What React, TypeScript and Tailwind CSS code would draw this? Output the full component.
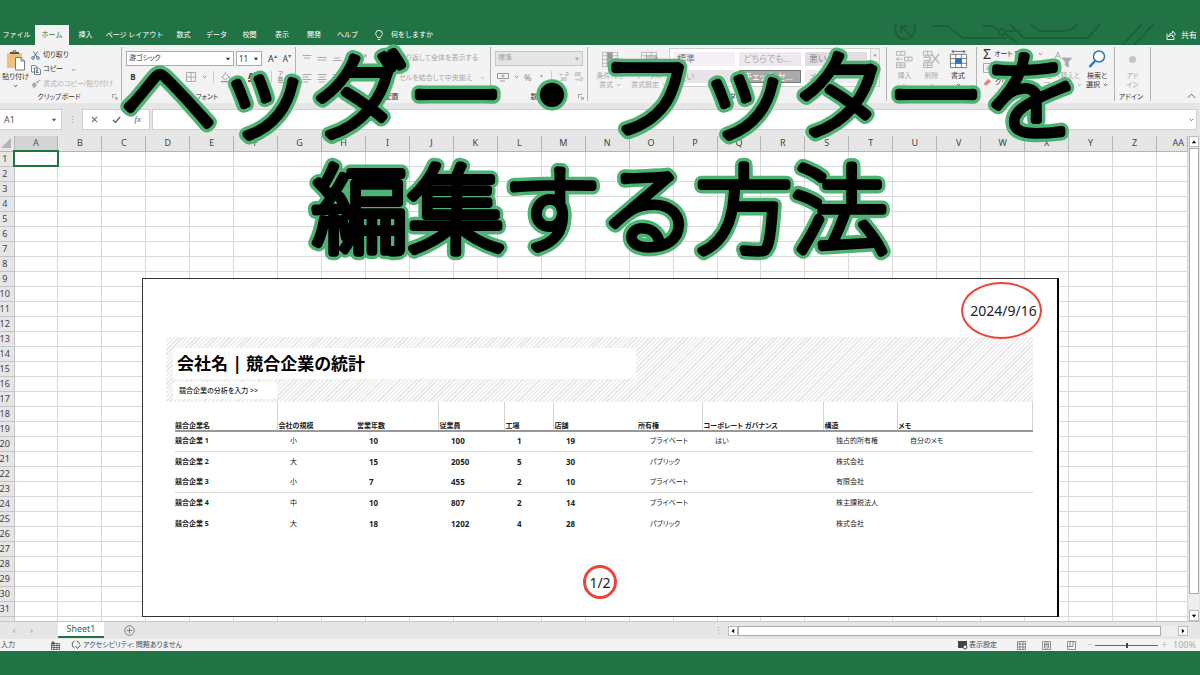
import type { ReactNode } from "react";

const columns = ["A", "B", "C", "D", "E", "F", "G", "H", "I", "J", "K", "L", "M", "N", "O", "P", "Q", "R", "S", "T", "U", "V", "W", "X", "Y", "Z", "AA"];
const rows = Array.from({ length: 32 }, (_, i) => i + 1);

const tabs = [
  { label: "ファイル", width: "w-[35px] pl-[2px] pr-1" },
  { label: "ホーム", width: "w-[34px]", active: true },
  { label: "挿入", width: "w-[33px]" },
  { label: "ページ レイアウト", width: "w-[65px]" },
  { label: "数式", width: "w-[33px]" },
  { label: "データ", width: "w-[33px]" },
  { label: "校閲", width: "w-[33px]" },
  { label: "表示", width: "w-[32px]" },
  { label: "開発", width: "w-[32px]" },
  { label: "ヘルプ", width: "w-[35px]" },
];

const competitors = [
  { name: "競合企業 1", size: "小", years: 10, staff: 100, plants: 1, shops: 19, owner: "プライベート", gov: "はい", structure: "独占的所有権", memo: "自分のメモ" },
  { name: "競合企業 2", size: "大", years: 15, staff: 2050, plants: 5, shops: 30, owner: "パブリック", gov: "", structure: "株式会社", memo: "" },
  { name: "競合企業 3", size: "小", years: 7, staff: 455, plants: 2, shops: 10, owner: "プライベート", gov: "", structure: "有限会社", memo: "" },
  { name: "競合企業 4", size: "中", years: 10, staff: 807, plants: 2, shops: 14, owner: "プライベート", gov: "", structure: "株主課税法人", memo: "" },
  { name: "競合企業 5", size: "大", years: 18, staff: 1202, plants: 4, shops: 28, owner: "パブリック", gov: "", structure: "株式会社", memo: "" },
];

const Chevron = ({ className = "text-gray-500" }: { className?: string }) => (
  <svg viewBox="0 0 6 4" className={`w-[5px] h-[4px] shrink-0 ${className}`} fill="none" stroke="currentColor">
    <path d="M1 .8 3 2.8 5 .8" />
  </svg>
);

const Triangle = ({ turn = "" }: { turn?: string }) => (
  <svg viewBox="0 0 6 6" className={`w-[6px] h-[6px] shrink-0 ${turn}`} fill="currentColor">
    <path d="M.8 1.800h4.400L3 4.500z" />
  </svg>
);

const Launcher = () => (
  <svg viewBox="0 0 7 7" className="w-[6px] h-[6px]" fill="none" stroke="#777" strokeWidth=".8">
    <path d="M.5 5V.5H5M3 3l3 3M6 3.5V6H3.5" />
  </svg>
);

const Group = ({ label, width, launcher, children }: { label: string; width: string; launcher?: boolean; children: ReactNode }) => (
  <section aria-label={label} className={`${width} shrink-0 h-[54px] mt-[2px] flex flex-col border-r border-[#b4b4b4]`}>
    <div className="flex-1 min-h-0">{children}</div>
    <div className="h-[8px] flex items-center justify-center">
      <span className="flex-1" />
      <span className="leading-[8px]">{label}</span>
      <span className="flex-1 flex justify-end pr-[3px]">
        {launcher && (
          <button aria-label={`${label}の設定`}>
            <Launcher />
          </button>
        )}
      </span>
    </div>
  </section>
);

const BigButton = ({ icon, lines, width, muted, chevron = true }: { icon: ReactNode; lines: string[]; width: string; muted?: boolean; chevron?: boolean }) => (
  <button className={`${width} shrink-0 flex flex-col items-center ${muted ? "text-[#a8a8a8]" : "text-[#333]"}`}>
    <span className="h-[24px] flex items-center">{icon}</span>
    {lines.map((line, i) => (
      <span key={line} className="h-[9px] leading-[9px] flex items-center gap-[3px] whitespace-nowrap">
        {line}
        {chevron && lines.length > 1 && i === lines.length - 1 && <Chevron className="text-current" />}
      </span>
    ))}
    {chevron && lines.length === 1 && (
      <span className="h-[9px] flex items-center">
        <Chevron className="text-current" />
      </span>
    )}
  </button>
);

const PasteIcon = () => (
  <svg viewBox="0 0 20 22" className="w-[20px] h-[22px]">
    <path d="M1 4h15v15H1z" fill="#efc17c" />
    <path d="M4 5V3h2.500a2 2 0 0 1 4 0H13v2z" fill="#555" />
    <circle cx="8.500" cy="2.600" r=".8" fill="#f3f3f3" />
    <path d="M9.500 8.500h5.500l3.500 3.500v9h-9z" fill="#fff" stroke="#777" />
    <path d="M15 8.500V12h3.500" fill="none" stroke="#777" />
  </svg>
);

const CutIcon = () => (
  <svg viewBox="0 0 10 10" className="w-[9px] h-[9px]" fill="none">
    <path d="M2.500.5 7 7M7.500.5 3 7" stroke="#555" />
    <circle cx="2.200" cy="7.800" r="1.500" stroke="#2f75b5" />
    <circle cx="7.800" cy="7.800" r="1.500" stroke="#2f75b5" />
  </svg>
);

const CopyIcon = () => (
  <svg viewBox="0 0 10 10" className="w-[10px] h-[10px]" fill="#fff" stroke="#666" strokeWidth=".8">
    <path d="M.5.5h4L6 2v5H.5zM3.500 3h4L9.500 5v4.500h-6z" />
    <path d="M5 5.500h2M5 7.500h3M2 3h1" stroke="#2f75b5" />
  </svg>
);

const BrushIcon = () => (
  <svg viewBox="0 0 10 10" className="w-[10px] h-[10px]" fill="#aaa">
    <path d="M.5 5.500 4 3l2 3-3 3.500zM5 2.500l1.500-1 1.500 2-1.500 1zM7.500 1.500 9 .5l.8 1L8.500 2.500z" />
  </svg>
);

const CellsIcon = ({ kind }: { kind: "insert" | "delete" | "format" }) => (
  <svg viewBox="0 0 20 20" className="w-[19px] h-[19px]" fill="none" stroke={kind === "format" ? "#777" : "#b0b0b0"}>
    {kind === "format" ? (
      <>
        <path d="M1.500 4.500h17v14h-17zM1.500 9h17M1.500 14h17M7 4.500v14M13 4.500v14" fill="#fff" />
        <path d="M7 9h6v5H7z" fill="#2f75b5" stroke="#2f75b5" />
        <path d="M3 1.500h14M5 0 3 1.500 5 3M15 0l2 1.500L15 3" stroke="#2f75b5" />
      </>
    ) : (
      <>
        <path d="M1.500 1.500h9v4h-9zM6 1.500v4M1.500 13.500h9v5h-9zM6 13.500v5M1.500 16h9" />
        {kind === "insert" ? <path d="M10 7.500h8v4h-8zM14 7.500v4M8 9.500H1.500M4 7.500l-2.500 2L4 11.500" /> : <path d="M1.500 7.500h7v4h-7M10 4l8 10M18 4l-8 10" strokeWidth="1.300" />}
      </>
    )}
  </svg>
);

const StyleIcon = ({ table }: { table?: boolean }) => (
  <svg viewBox="0 0 20 18" className="w-[19px] h-[17px]" fill="none" stroke="#aaa" strokeWidth=".8">
    <path d="M1.500 1.500h16v15h-16zM1.500 5h16M1.500 9h16M1.500 13h16M6.500 1.500v15M12 1.500v15" />
    {table ? <path d="M6.500 5h11v8h-11z" fill="#c9c9c9" /> : <path d="M6.500 1.500H12V9H6.500zM6.500 9H9v7.500H6.500z" fill="#999" />}
    {table && <path d="m10 16 7-10 2 1.500L13 17z" fill="#999" stroke="none" />}
  </svg>
);

const LinesIcon = ({ d }: { d: string }) => (
  <svg viewBox="0 0 10 10" className="w-[10px] h-[10px] shrink-0" fill="none" stroke="#aaa">
    <path d={d} />
  </svg>
);

const Ribbon = () => (
  <div className="h-[58px] flex bg-[#f3f3f3] text-[7px] text-[#333] overflow-hidden">
    <Group label="クリップボード" width="w-[122px]" launcher>
      <div className="flex pt-[1px]">
        <BigButton width="w-[31px]" icon={<PasteIcon />} lines={["貼り付け"]} />
        <div className="flex flex-col items-start">
          <button className="h-[14px] flex items-center gap-[3px]"><CutIcon />切り取り</button>
          <button className="h-[15px] flex items-center gap-[2px]"><CopyIcon />コピー<span className="w-1" /><Chevron /></button>
          <button className="h-[14px] flex items-center gap-[2px] text-[#b0b0b0]"><BrushIcon />書式のコピー/貼り付け</button>
        </div>
      </div>
    </Group>

    <Group label="フォント" width="w-[174px]" launcher>
      <div className="flex items-center pl-1 pt-1 gap-[2px]">
        <button aria-label="フォント名" className="w-[108px] h-[15px] px-[2px] flex items-center justify-between bg-white border border-[#ababab] text-[7px]">
          游ゴシック<Triangle />
        </button>
        <button aria-label="フォント サイズ" className="w-[26px] h-[15px] px-[2px] flex items-center justify-between bg-white border border-[#ababab] text-[8px]">
          11<Triangle />
        </button>
        <button className="ml-1 text-[9px] leading-[12px] flex">A<span className="text-[6px] leading-[6px] text-[#2f75b5]">▴</span></button>
        <button className="ml-1 text-[8px] leading-[12px] flex">A<span className="text-[6px] leading-[6px] text-[#2f75b5]">▾</span></button>
      </div>
      <div className="flex items-center h-[22px] pl-[6px] gap-[6px]">
        <button className="font-bold text-[8px] w-[10px]">B</button>
        <button className="italic text-[8px] w-[10px]">I</button>
        <button className="underline text-[8px] w-[20px]">U</button>
        <LinesIcon d="M.5.5h9v9h-9zM5 .5v9M.5 5h9" />
        <Chevron />
        <span className="w-px h-3 bg-[#ccc]" />
        <svg viewBox="0 0 12 12" className="w-[11px] h-[11px]" fill="none" stroke="#999">
          <path d="m2 5.500 4-4 4 4-4 3zM6 1.500V.3M10 5.500l1.300 2" />
          <path d="M1 10.500h10" strokeWidth="1.500" />
        </svg>
        <Chevron />
        <span className="text-[8px] leading-[8px] font-bold border-b-2 border-[#e33]">A</span>
        <Chevron />
        <span className="w-px h-3 bg-[#ccc]" />
        <span className="text-[6px] leading-[6px] text-[#888] flex flex-col items-center"><span>ア</span><span>亜</span></span>
      </div>
    </Group>

    <Group label="配置" width="w-[195px]" launcher>
      <div className="flex items-center h-[22px] pl-[6px] gap-[5px] text-[#a8a8a8]">
        <LinesIcon d="M.5 2.500h9M2 5h6" />
        <LinesIcon d="M.5 4.500h9M.5 7h9" />
        <LinesIcon d="M.5 7.500h9M2 5h6" />
        <span className="w-1" />
        <svg viewBox="0 0 12 12" className="w-[12px] h-[12px]" fill="none" stroke="#999">
          <path d="m2 11 8-8M7.500 3H10v2.500" />
          <circle cx="3" cy="5" r="1.500" />
          <path d="m4 2.500 3 3" />
        </svg>
        <Chevron />
        <button className="ml-4 whitespace-nowrap">折り返して全体を表示する</button>
      </div>
      <div className="flex items-center h-[18px] pl-[6px] gap-[5px] text-[#a8a8a8]">
        <LinesIcon d="M.5 1.500h9M.5 4h6M.5 6.500h9M.5 9h6" />
        <LinesIcon d="M.5 1.500h9M2 4h6M.5 6.500h9M2 9h6" />
        <LinesIcon d="M.5 1.500h9M3 4h7M.5 6.500h9M3 9h7" />
        <span className="w-[32px]" />
        <LinesIcon d="M.5.5h9v9h-9zM.5 3h9M.5 7h9M5 .5V3M5 7v2.500" />
        <button className="flex items-center gap-2 whitespace-nowrap">セルを結合して中央揃え<Chevron className="text-[#aaa]" /></button>
      </div>
    </Group>

    <Group label="数値" width="w-[97px]" launcher>
      <div className="pl-1 pt-1 text-[#a8a8a8]">
        <button aria-label="表示形式" className="w-[88px] h-[15px] px-[2px] flex items-center justify-between bg-[#e6e6e6] border border-[#c6c6c6]">
          標準<Triangle />
        </button>
      </div>
      <div className="flex items-center h-[22px] pl-[6px] gap-[5px] text-[#888]">
        <svg viewBox="0 0 12 10" className="w-[12px] h-[10px]" fill="none" stroke="#999">
          <path d="M.5 1.500h11v5H.5z" />
          <circle cx="6" cy="4" r="1" />
          <path d="M3 9h5" />
        </svg>
        <Chevron />
        <span className="text-[9px] leading-[9px]">%</span>
        <span className="text-[9px] leading-[9px] font-bold ml-1">’</span>
        <span className="w-px h-3 bg-[#ccc] ml-1" />
        <span className="text-[5px] leading-[5px] ml-[2px]">←.0<br />.00</span>
        <span className="text-[5px] leading-[5px]">.00<br />→.0</span>
      </div>
    </Group>

    <Group label="スタイル" width="w-[299px]">
      <div className="flex pl-[2px]">
        <BigButton width="w-[40px]" muted icon={<StyleIcon />} lines={["条件付き", "書式"]} />
        <BigButton width="w-[38px]" muted icon={<StyleIcon table />} lines={["テーブル", "書式設定"]} />
        <div className="ml-[1px] mt-[1px] w-[211px] h-[39px] flex bg-white border border-[#cfcfcf] text-[9px] text-[#aaa]">
          <div className="flex-1 grid grid-cols-3 gap-1 p-[3px]">
            <button className="bg-[#f5f0f5] text-left pl-1 leading-[13px] text-[#777]">標準</button>
            <button className="bg-[#efe9ef] text-left pl-1 leading-[13px] whitespace-nowrap overflow-hidden">どちらでも...</button>
            <button className="bg-[#e4dee4] text-left pl-1 leading-[13px] text-[#888]">悪い</button>
            <button className="bg-[#e9e4e9] text-left pl-1 leading-[13px]">良い</button>
            <button className="bg-[#aaa] text-left pl-1 leading-[11px] border border-[#777] text-white whitespace-nowrap overflow-hidden">チェック セ...</button>
            <button className="bg-[#f1edf1] text-left pl-1 leading-[13px]">メモ</button>
          </div>
          <div className="w-[9px] flex flex-col items-center border-l border-[#cfcfcf] bg-[#f0f0f0]">
            <button aria-label="前のスタイル" className="flex-1"><Triangle turn="rotate-180" /></button>
            <button aria-label="次のスタイル" className="flex-1 border-y border-[#cfcfcf]"><Triangle /></button>
            <button aria-label="その他のスタイル" className="flex-1"><Triangle /></button>
          </div>
        </div>
      </div>
    </Group>

    <Group label="セル" width="w-[90px]">
      <div className="flex pl-1">
        <BigButton width="w-[27px]" muted icon={<CellsIcon kind="insert" />} lines={["挿入"]} />
        <BigButton width="w-[27px]" muted icon={<CellsIcon kind="delete" />} lines={["削除"]} />
        <BigButton width="w-[26px]" icon={<CellsIcon kind="format" />} lines={["書式"]} />
      </div>
    </Group>

    <Group label="編集" width="w-[138px]">
      <div className="flex pl-[6px]">
        <div className="w-[62px] flex flex-col items-start">
          <button className="h-[14px] flex items-center gap-[3px] whitespace-nowrap"><span className="text-[14px] leading-[14px]">Σ</span>オート SUM<span className="w-[2px]" /><Chevron /></button>
          <button className="h-[14px] flex items-center gap-[3px] text-[#a8a8a8]"><LinesIcon d="M.5.5h9v9h-9zM5 2v5M3 5l2 2 2-2" />フィル</button>
          <button className="h-[14px] flex items-center gap-[3px]">
            <svg viewBox="0 0 10 10" className="w-[9px] h-[9px]"><path d="m1 6 5-5 3 3-5 4H2z" fill="#ee7c80" /></svg>
            クリア
          </button>
        </div>
        <BigButton
          width="w-[36px]"
          muted
          icon={
            <svg viewBox="0 0 20 18" className="w-[19px] h-[17px]" fill="none" stroke="#aaa">
              <path d="m1 8 3-7 3 7M2 5.500h4M1.500 10.500h5l-5 6h5" />
              <path d="M8.500 7.500h10L15 11.500V17l-3-2v-3.500z" fill="#aaa" />
            </svg>
          }
          lines={["並べ替えと", "フィルター"]}
        />
        <BigButton
          width="w-[32px]"
          icon={
            <svg viewBox="0 0 18 18" className="w-[18px] h-[18px]" fill="none" stroke="#2f75b5">
              <circle cx="11" cy="6.500" r="5.500" strokeWidth="1.500" fill="#fff" />
              <path d="m7 11-5.500 6" strokeWidth="2.500" />
            </svg>
          }
          lines={["検索と", "選択"]}
        />
      </div>
    </Group>

    <Group label="アドイン" width="w-[36px]">
      <BigButton width="w-[35px]" muted chevron={false} icon={<span className="w-[7px] h-[7px] rounded-full bg-[#c4c4c4]" />} lines={["アド", "イン"]} />
    </Group>

    <div className="flex-1 flex items-end justify-end p-[4px]">
      <button aria-label="リボンを折りたたむ">
        <svg viewBox="0 0 10 6" className="w-[9px] h-[6px]" fill="none" stroke="#555"><path d="m1 5 4-4 4 4" /></svg>
      </button>
    </div>
  </div>
);

const TitleBar = () => (
  <header className="relative h-[45px] flex items-end bg-[#217346] text-white text-[7px]">
    {/* circuit pattern of the Office theme */}
    <svg viewBox="0 0 270 21" className="absolute right-[40px] bottom-0 w-[270px] h-[21px]" fill="none" stroke="#1d6039" strokeWidth="2">
      <circle cx="15" cy="5" r="10" />
      <path d="m21 12-9-9M11 9V2h7M41 2h16l16 12h44M92 2h10l7 5M115 9l12 10M116 7h16M120 0l14 14h64l12-14M140 0c6 6 10 7 16 7h16c6 0 10-1 16-7M232 21l20-21M244 21l20-21" />
      <circle cx="112" cy="8" r="3" />
    </svg>
    <nav className="relative flex h-[20px]">
      {tabs.map((tab) => (
        <button key={tab.label} className={`${tab.width} whitespace-nowrap ${tab.active ? "bg-[#f3f3f3] text-[#217346]" : ""}`}>
          {tab.label}
        </button>
      ))}
      <button className="flex items-center gap-2 pl-[10px] whitespace-nowrap">
        <svg viewBox="0 0 8 11" className="w-[8px] h-[11px]" fill="none" stroke="currentColor" strokeWidth=".9">
          <path d="M2.500 7.500C2.500 6 .7 5.500.7 3.600a3.300 3.300 0 0 1 6.600 0C7.300 5.500 5.500 6 5.500 7.500zM2.800 9.500h2.400" />
        </svg>
        何をしますか
      </button>
    </nav>
    <button className="relative ml-auto mr-[3px] h-[20px] flex items-center gap-[5px]">
      <svg viewBox="0 0 10 10" className="w-[10px] h-[10px]" fill="none" stroke="currentColor" strokeWidth=".9">
        <path d="M1 3.500v6h7V7M2.500 7c.5-3 2-4 4-4V1l3 3-3 3V5c-2 0-3 .5-4 2z" />
      </svg>
      <span className="text-[8px]">共有</span>
    </button>
  </header>
);

const FormulaBar = () => (
  <div className="h-[33px] py-[6px] pr-[3px] flex gap-[2px] bg-[#e6e6e6] text-[#555]">
    <button aria-label="名前ボックス" className="w-[62px] px-1 flex items-center justify-between bg-white border border-l-0 border-[#d0d0d0] text-[9px]">
      A1<Triangle />
    </button>
    <span className="w-[16px] flex items-center justify-center text-[9px] text-[#999]">⋮</span>
    <div className="w-[68px] px-2 flex items-center justify-between bg-white border border-[#d0d0d0]">
      <button aria-label="キャンセル"><svg viewBox="0 0 8 8" className="w-[7px] h-[7px]" stroke="#666" strokeWidth="1.200"><path d="m1 1 6 6M7 1 1 7" /></svg></button>
      <button aria-label="入力"><svg viewBox="0 0 9 8" className="w-[9px] h-[8px]" fill="none" stroke="#666" strokeWidth="1.500"><path d="m1 4 2.500 2.500L8 1" /></svg></button>
      <button aria-label="関数の挿入" className="font-['Liberation_Serif',serif] italic text-[9px]">fx</button>
    </div>
    <div className="flex-1 flex bg-white border border-[#d0d0d0]">
      <input aria-label="数式バー" className="flex-1 min-w-0 bg-transparent outline-none" />
      <span className="flex items-center pr-[2px]"><Chevron className="text-[#555]" /></span>
    </div>
  </div>
);

const Grid = () => (
  <table className="w-full table-fixed border-collapse text-[9px] leading-[14px] text-[#444]">
    <colgroup>
      <col className="w-[14px]" />
      {columns.map((c) => (
        <col key={c} className={c === "AA" ? "w-[31px]" : ""} />
      ))}
    </colgroup>
    <thead>
      <tr className="h-[15px] bg-[#e6e6e6]">
        <th aria-label="すべて選択" className="p-0 border-r border-b border-[#b5b5b5]">
          <svg viewBox="0 0 12 12" className="w-[12px] h-[12px]" fill="#b4b4b4"><path d="M11 1v10H1z" /></svg>
        </th>
        {columns.map((c) => (
          <th
            key={c}
            className={`py-0 pl-0 font-normal border-r border-b ${c === "A" ? "bg-[#d4d4d4] text-[#217346] border-r-[#b5b5b5] border-b-[#217346]" : "border-[#b5b5b5]"} ${c === "AA" ? "text-right pr-[3px]" : "pr-0"}`}
          >
            {c}
          </th>
        ))}
      </tr>
    </thead>
    <tbody>
      {rows.map((r) => (
        <tr key={r} className="h-[15px]">
          <th className="p-0 font-normal bg-[#e6e6e6] border-r border-b border-[#c4c4c4]">
            {r < 32 && <span className="flex justify-center pr-1">{r}</span>}
          </th>
          {columns.map((c) => (
            <td key={c} className={`p-0 ${r === 1 && c === "A" ? "outline-2 -outline-offset-1 outline-[#217346]" : "border-r border-b border-[#d9d9d9]"}`} />
          ))}
        </tr>
      ))}
    </tbody>
  </table>
);

const Report = () => (
  <article className="absolute left-[142px] right-[141px] top-[142px] h-[339px] bg-white border border-[#333] border-r-2 border-r-black text-[7px] text-[#222]">
    <div className="h-[58px] px-[16px] flex justify-end">
      <time className="mt-[3px] -mr-px w-[81px] h-[57px] shrink-0 pl-1 flex items-center justify-center rounded-[50%] border-2 border-[#ee4438] text-[14px] font-['Noto_Sans',sans-serif]">
        2024/9/16
      </time>
    </div>
    <div className="ml-[23px] mr-6">
      <div className="h-[65px] pt-[11px] pl-[7px] bg-[repeating-linear-gradient(135deg,#e6e6e6_0px,#e6e6e6_1px,#fafafa_1px,#fafafa_3px)]">
        <h2 className="w-[463px] h-[31px] pl-[4px] bg-white text-[17px] leading-[31px] font-bold text-black">会社名 | 競合企業の統計</h2>
        <a href="#analysis" className="mt-[3px] w-[104px] h-[17px] pl-[6px] block bg-white leading-[17px] font-medium">競合企業の分析を入力 &gt;&gt;</a>
      </div>
      <table className="w-full table-fixed border-collapse text-left">
        <colgroup>
          <col className="w-[9px]" />
          <col className="w-[102px]" />
          <col className="w-[79px]" />
          <col className="w-[82px]" />
          <col className="w-[66px]" />
          <col className="w-[49px]" />
          <col className="w-[84px]" />
          <col className="w-[65px]" />
          <col className="w-[121px]" />
          <col className="w-[74px]" />
          <col />
        </colgroup>
        <thead>
          <tr className="h-[29px] align-bottom leading-[9px] whitespace-nowrap">
            <th className="p-0" />
            <th className="p-0 border-r border-b-2 border-r-[#d4d4d4] border-b-[#999]">競合企業名</th>
            <th className="p-0 pl-px border-b-2 border-[#999]">会社の規模</th>
            <th className="p-0 pl-px border-r border-b-2 border-r-[#d4d4d4] border-b-[#999]">営業年数</th>
            <th className="p-0 pl-px border-r border-b-2 border-r-[#d4d4d4] border-b-[#999]">従業員</th>
            <th className="p-0 pl-px border-r border-b-2 border-r-[#d4d4d4] border-b-[#999]">工場</th>
            <th className="p-0 pl-px border-b-2 border-[#999]">店舗</th>
            <th className="p-0 pl-px border-r border-b-2 border-r-[#d4d4d4] border-b-[#999]">所有権</th>
            <th className="p-0 pl-px border-r border-b-2 border-r-[#d4d4d4] border-b-[#999]">コーポレート ガバナンス</th>
            <th className="p-0 pl-px border-r border-b-2 border-r-[#d4d4d4] border-b-[#999]">構造</th>
            <th className="p-0 pl-px border-r border-b-2 border-r-[#d4d4d4] border-b-[#999]">メモ</th>
          </tr>
        </thead>
        <tbody>
          {competitors.map((c, i) => (
            <tr key={c.name} className={`${i === 0 || i === 2 ? "h-[20px]" : "h-[21px]"} leading-[10px] whitespace-nowrap`}>
              <td className="p-0" />
              {[
                { text: c.name, look: "font-bold" },
                { text: c.size, look: "pl-[13px]" },
                { text: c.years, look: "pl-[13px] font-bold text-[8px]" },
                { text: c.staff, look: "pl-[13px] font-bold text-[8px]" },
                { text: c.plants, look: "pl-[13px] font-bold text-[8px]" },
                { text: c.shops, look: "pl-[13px] font-bold text-[8px]" },
                { text: c.owner, look: "pl-[13px]" },
                { text: c.gov, look: "pl-[13px]" },
                { text: c.structure, look: "pl-[13px]" },
                { text: c.memo, look: "pl-[13px]" },
              ].map((cell, n) => (
                <td key={n} className={`py-0 pr-0 ${cell.look} ${i === 0 || i === 2 ? "border-b border-[#dadada]" : ""}`}>
                  {cell.text}
                </td>
              ))}
            </tr>
          ))}
        </tbody>
      </table>
    </div>
    <footer className="absolute inset-x-0 bottom-[17px] flex justify-center text-[14px] font-['Noto_Sans',sans-serif]">
      <span className="w-[34px] h-[34px] flex items-center justify-center rounded-full border-[3px] border-[#ee4438]">1/2</span>
    </footer>
  </article>
);

const SheetTabs = () => (
  <div className="h-[18px] flex items-center bg-[#e6e6e6] border-t border-[#c4c4c4] text-[#bbb]">
    <div className="w-[58px] flex gap-3 pl-[11px]">
      <button aria-label="前のシート"><Triangle turn="rotate-90" /></button>
      <button aria-label="次のシート"><Triangle turn="-rotate-90" /></button>
    </div>
    <button className="w-[46px] h-[16px] self-start bg-white border-b-2 border-[#217346] text-[#217346] text-[9px] leading-[14px]">Sheet1</button>
    <button aria-label="新しいシート" className="ml-5">
      <svg viewBox="0 0 12 12" className="w-[11px] h-[11px]" fill="none" stroke="#777"><circle cx="6" cy="6" r="5.200" /><path d="M6 3v6M3 6h6" /></svg>
    </button>
    <span className="ml-auto mr-[5px] text-[9px] text-[#999]">⋮</span>
    <div className="w-[460px] mr-3 flex items-center text-black">
      <button aria-label="左へ" className="w-[10px] h-[10px] flex items-center justify-center bg-white border border-[#bbb]"><Triangle turn="rotate-90" /></button>
      <div className="flex-1 bg-[#eee] pr-[17px]"><div className="h-[10px] bg-white border border-[#ababab]" /></div>
      <button aria-label="右へ" className="w-[10px] h-[10px] flex items-center justify-center bg-white border border-[#bbb]"><Triangle turn="-rotate-90" /></button>
    </div>
  </div>
);

const StatusBar = () => (
  <div className="h-[12px] flex items-center bg-[#f3f3f3] text-[7px] text-[#444] whitespace-nowrap">
    <span className="w-[51px] pl-[1px]">入力</span>
    <svg viewBox="0 0 9 9" className="w-[9px] h-[9px]" fill="none" stroke="#555" strokeWidth=".8"><path d="M.5 2.500h8v6h-8zM.5 4.500h8M.5 6.500h8M3 2.500v6M6 2.500v6" /><circle cx="2" cy="2" r="1.200" fill="#555" /></svg>
    <svg viewBox="0 0 10 10" className="ml-[11px] w-[10px] h-[10px]" fill="none" stroke="#555"><path d="M3.500 1a3.800 3.800 0 0 0 0 7M6 1.200a3.800 3.800 0 0 1 2.500 3M4.500 6l2 2.500L9.500 5" /></svg>
    <span className="ml-[2px]">アクセシビリティ: 問題ありません</span>
    <span className="ml-auto mr-5 flex items-center gap-[1px]">
      <svg viewBox="0 0 10 9" className="w-[10px] h-[9px]"><path d="M0 0h9v4L5 7H0z" fill="#444" /><circle cx="7" cy="6" r="2" fill="#f3f3f3" stroke="#444" /></svg>
      表示設定
    </span>
    <div className="flex gap-4">
      <button aria-label="標準"><svg viewBox="0 0 9 9" className="w-[9px] h-[9px]" fill="none" stroke="#777" strokeWidth=".8"><path d="M.5.5h8v8h-8zM.5 3h8M.5 6h8M3 .5v8M6 .5v8" /></svg></button>
      <button aria-label="ページ レイアウト"><svg viewBox="0 0 9 9" className="w-[9px] h-[9px]" fill="none" stroke="#777" strokeWidth=".8"><path d="M.5.5h8v8h-8zM2.500 2h4v5h-4zM3 3.500h3M3 5h3" /></svg></button>
      <button aria-label="改ページ プレビュー"><svg viewBox="0 0 9 9" className="w-[9px] h-[9px]" fill="none" stroke="#777" strokeWidth=".8"><path d="M.5.5h8v8h-8zM3 .5v5M6 .5v5H.5" /></svg></button>
    </div>
    <div className="ml-3 mr-1 flex items-center gap-[3px] text-[#aaa]">
      <span>−</span>
      <div className="w-[63px] h-px bg-[#666] flex items-center justify-center"><span className="w-[2px] h-[5px] shrink-0 bg-[#444]" /></div>
      <span>＋</span>
      <span className="ml-[2px] text-[9px]">100%</span>
    </div>
  </div>
);

const Headline = () => (
  <svg className="absolute inset-x-0 top-0 w-full h-[300px] pointer-events-none" strokeLinejoin="round" strokeLinecap="round">
    <use href="#headline" stroke="#4db374" strokeWidth="15" />
    <g stroke="#000" strokeWidth="8">
      <text id="headline" textAnchor="middle" className="text-[96px] font-thin font-['Noto_Sans_CJK_JP',sans-serif]">
        <tspan x="50%" y="131">ヘッダー・フッターを</tspan>
        <tspan x="50%" y="245">編集する方法</tspan>
      </text>
    </g>
  </svg>
);

const App = () => {
  return (
    <div lang="ja" className="relative h-screen min-h-[480px] flex flex-col overflow-hidden bg-[#217346] font-['Noto_Sans','Noto_Sans_CJK_JP',sans-serif]">
      <TitleBar />
      <div className="flex-1 min-h-0 flex flex-col [font-feature-settings:'palt']">
        <Ribbon />
        <FormulaBar />
        <main className="relative flex-1 min-h-0 flex bg-white">
          <div className="flex-1 min-w-0 overflow-hidden">
            <Grid />
          </div>
          <div className="w-[12px] px-px flex flex-col items-center gap-px bg-[#e6e6e6]">
            <button aria-label="上へ" className="w-[10px] h-[11px] flex items-center justify-center bg-white border border-[#bbb]"><Triangle turn="rotate-180" /></button>
            <div className="flex-1 w-[10px] pb-[15px] flex bg-[#eee]"><div className="flex-1 bg-white border border-[#ababab]" /></div>
            <button aria-label="下へ" className="w-[10px] h-[11px] flex items-center justify-center bg-white border border-[#bbb]"><Triangle /></button>
          </div>
          <Report />
        </main>
        <SheetTabs />
        <StatusBar />
      </div>
      <div className="h-[24px] shrink-0" />
      <Headline />
    </div>
  );
};

export default App;
